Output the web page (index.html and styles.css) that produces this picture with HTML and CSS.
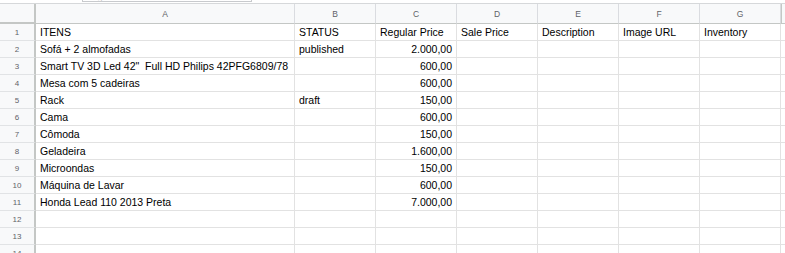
FILE: index.html
```html
<!DOCTYPE html>
<html lang="pt">
<head>
<meta charset="utf-8">
<title>Planilha</title>
<link rel="stylesheet" href="styles.css">
</head>
<body>
<div class="sheet">
  <div class="tip"><span>Digitar</span></div>
  <div class="grid">
    <div class="corner"></div>
    <div class="ch">A</div><div class="ch">B</div><div class="ch">C</div><div class="ch">D</div><div class="ch">E</div><div class="ch">F</div><div class="ch">G</div><div class="ch last"></div>

    <div class="rh">1</div><div class="c">ITENS</div><div class="c">STATUS</div><div class="c">Regular Price</div><div class="c">Sale Price</div><div class="c">Description</div><div class="c">Image URL</div><div class="c">Inventory</div><div class="c"></div>
    <div class="rh">2</div><div class="c">Sofá + 2 almofadas</div><div class="c">published</div><div class="c n">2.000,00</div><div class="c"></div><div class="c"></div><div class="c"></div><div class="c"></div><div class="c"></div>
    <div class="rh">3</div><div class="c">Smart TV 3D Led 42"&nbsp; Full HD Philips 42PFG6809/78</div><div class="c"></div><div class="c n">600,00</div><div class="c"></div><div class="c"></div><div class="c"></div><div class="c"></div><div class="c"></div>
    <div class="rh">4</div><div class="c">Mesa com 5 cadeiras</div><div class="c"></div><div class="c n">600,00</div><div class="c"></div><div class="c"></div><div class="c"></div><div class="c"></div><div class="c"></div>
    <div class="rh">5</div><div class="c">Rack</div><div class="c">draft</div><div class="c n">150,00</div><div class="c"></div><div class="c"></div><div class="c"></div><div class="c"></div><div class="c"></div>
    <div class="rh">6</div><div class="c">Cama</div><div class="c"></div><div class="c n">600,00</div><div class="c"></div><div class="c"></div><div class="c"></div><div class="c"></div><div class="c"></div>
    <div class="rh">7</div><div class="c">Cômoda</div><div class="c"></div><div class="c n">150,00</div><div class="c"></div><div class="c"></div><div class="c"></div><div class="c"></div><div class="c"></div>
    <div class="rh">8</div><div class="c">Geladeira</div><div class="c"></div><div class="c n">1.600,00</div><div class="c"></div><div class="c"></div><div class="c"></div><div class="c"></div><div class="c"></div>
    <div class="rh">9</div><div class="c">Microondas</div><div class="c"></div><div class="c n">150,00</div><div class="c"></div><div class="c"></div><div class="c"></div><div class="c"></div><div class="c"></div>
    <div class="rh">10</div><div class="c">Máquina de Lavar</div><div class="c"></div><div class="c n">600,00</div><div class="c"></div><div class="c"></div><div class="c"></div><div class="c"></div><div class="c"></div>
    <div class="rh">11</div><div class="c">Honda Lead 110 2013 Preta</div><div class="c"></div><div class="c n">7.000,00</div><div class="c"></div><div class="c"></div><div class="c"></div><div class="c"></div><div class="c"></div>
    <div class="rh">12</div><div class="c"></div><div class="c"></div><div class="c"></div><div class="c"></div><div class="c"></div><div class="c"></div><div class="c"></div><div class="c"></div>
    <div class="rh">13</div><div class="c"></div><div class="c"></div><div class="c"></div><div class="c"></div><div class="c"></div><div class="c"></div><div class="c"></div><div class="c"></div>
    <div class="rh">14</div><div class="c"></div><div class="c"></div><div class="c"></div><div class="c"></div><div class="c"></div><div class="c"></div><div class="c"></div><div class="c"></div>
  </div>
</div>
</body>
</html>
```
FILE: styles.css
```css
html, body {
  margin: 0;
  padding: 0;
  background: #ffffff;
  overflow: hidden;
}

.sheet {
  position: relative;
  width: 785px;
  height: 253px;
  overflow: hidden;
  padding-top: 3px;
  box-sizing: border-box;
  font-family: "Liberation Sans", Arial, sans-serif;
}

.tip {
  position: absolute;
  left: 82px;
  top: -10px;
  width: 170px;
  height: 12px;
  border: 1px solid #c8cacd;
  background: #ffffff;
  font-size: 9px;
  color: #c6c6c6;
  padding-left: 6px;
  box-sizing: border-box;
  z-index: 2;
  overflow: hidden;
}

.tip span {
  display: block;
  line-height: 12px;
}

.grid {
  display: grid;
  grid-template-columns: 36px 259px 81px 81px 81px 81px 81px 81px 81px;
  grid-auto-rows: 17px;
  grid-template-rows: 20px;
  border-top: 1px solid #d6d8da;
}

.corner,
.ch {
  background: #f8f9fa;
  border-bottom: 1px solid #c4c7c5;
  border-right: 1px solid #dadce0;
  font-size: 8.5px;
  color: #5f6368;
  display: flex;
  align-items: center;
  justify-content: center;
  padding-top: 1px;
}

.corner {
  border-right: 2px solid #c4c7c5;
  border-bottom: 2px solid #c4c7c5;
}

.ch.last {
  border-left: 1px solid #c4c7c5;
}

.rh {
  background: #f8f9fa;
  border-right: 2px solid #c4c7c5;
  border-bottom: 1px solid #e1e3e5;
  font-size: 8px;
  color: #5f6368;
  display: flex;
  align-items: center;
  justify-content: center;
}

.c {
  border-right: 1px solid #e2e2e2;
  border-bottom: 1px solid #e2e2e2;
  font-size: 10.5px;
  color: #000000;
  padding: 0 3px 0 4px;
  display: flex;
  align-items: center;
  white-space: nowrap;
  overflow: visible;
  min-width: 0;
}

.c.n {
  justify-content: flex-end;
  padding-right: 4px;
}
```
